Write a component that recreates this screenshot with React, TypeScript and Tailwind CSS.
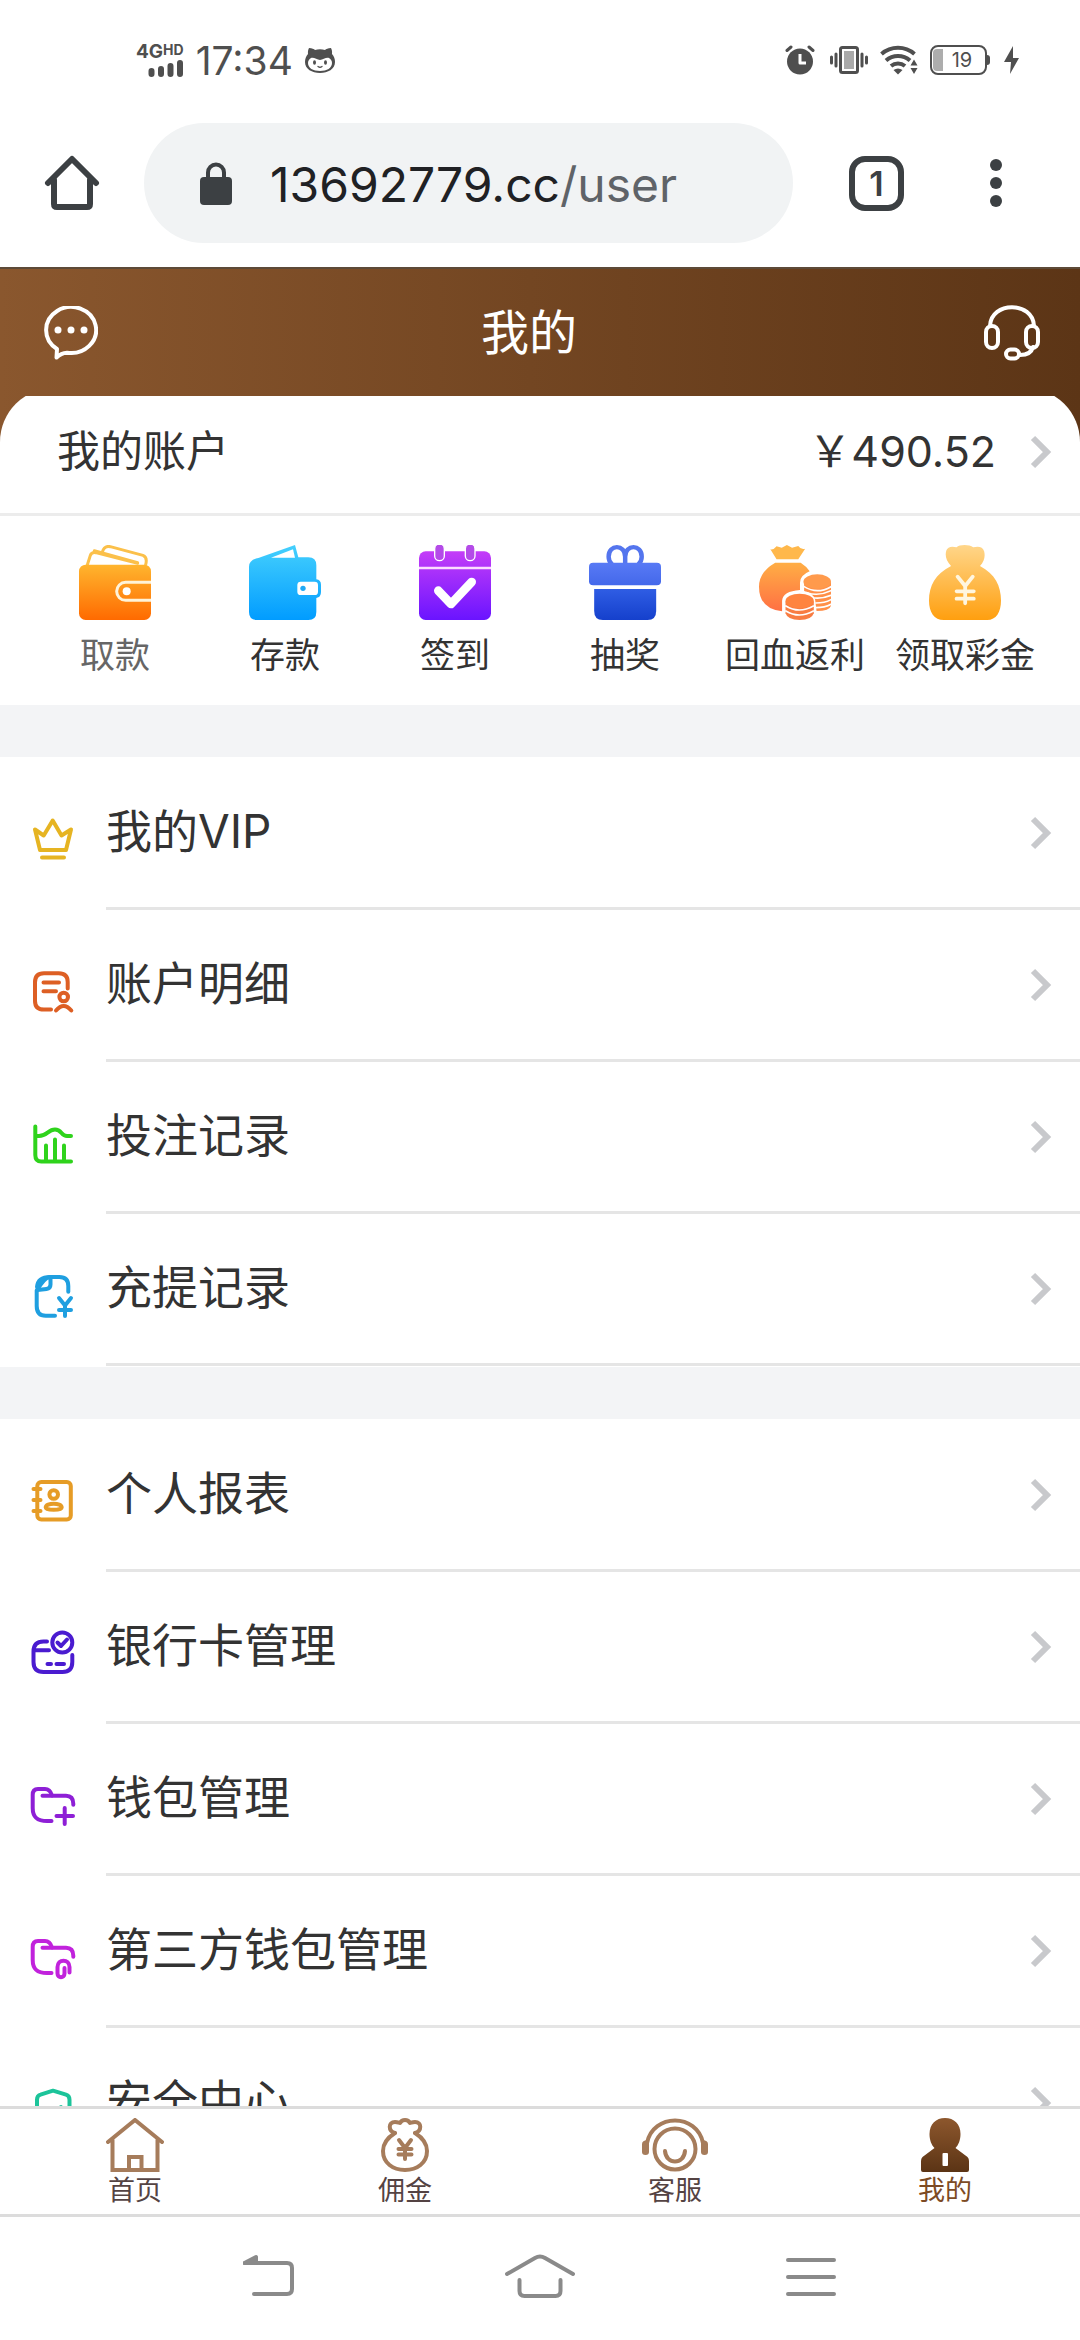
import type { ReactNode } from 'react';

interface IconProps {
  w: number;
  h: number;
  box?: string;
  stroke?: number;
  children: ReactNode;
}

function Icon({ w, h, box, stroke = 3, children }: IconProps) {
  return (
    <svg
      width={w}
      height={h}
      viewBox={box ?? `0 0 ${w} ${h}`}
      preserveAspectRatio="none"
      fill="none"
      stroke="currentColor"
      strokeWidth={stroke}
      strokeLinecap="round"
      strokeLinejoin="round"
      aria-hidden="true"
      className="shrink-0"
    >
      {children}
    </svg>
  );
}

function Gradient({ id, from, to }: { id: string; from: string; to: string }) {
  return (
    <defs>
      <linearGradient id={id} x1="0" y1="0" x2="0" y2="1">
        <stop offset="0" stopColor={from} />
        <stop offset="1" stopColor={to} />
      </linearGradient>
    </defs>
  );
}

function Chevron() {
  return (
    <svg width="22" height="34" viewBox="0 0 22 34" fill="none" className="shrink-0 text-[#c8c9cc]" aria-hidden="true">
      <path d="M3 3l14 14L3 31" stroke="currentColor" strokeWidth="6" />
    </svg>
  );
}

function StatusBar() {
  return (
    <div className="flex h-[100px] items-center justify-between pt-5 pr-[60px] pl-[136px] text-[#4f4f4f]">
      <div className="flex items-center">
        <div className="flex flex-col items-end">
          <span className="flex items-start font-bold">
            <span className="text-[19px] leading-4">4G</span>
            <span className="text-[14px] leading-3">HD</span>
          </span>
          <Icon w={36} h={17} stroke={6}>
            <path d="M3.500 11v3M13 9v5M22.500 6v8M32 3v11" />
          </Icon>
        </div>
        <span className="ml-3 text-[39px] leading-none">17:34</span>
        <span className="ml-3">
          <Icon w={30} h={25} stroke={0}>
            <path
              fill="currentColor"
              d="M4 0c3 0 5 1 6 2 3-1 7-1 10 0 1-1 3-2 6-2 1.500 3 1 5 1 6 2 2 3 5 3 8 0 7-7 11-15 11S0 21 0 14c0-3 1-6 3-8 0-1-.5-3 1-6z"
            />
            <path fill="#fff" d="M15 12c3 0 6-3 9-2 2 1 3 3 3 5 0 5-5 8-12 8S3 20 3 15c0-2 1-4 3-5 3-1 6 2 9 2z" />
            <ellipse cx="9.500" cy="14.500" rx="1.500" ry="2.300" fill="currentColor" />
            <ellipse cx="20.500" cy="14.500" rx="1.500" ry="2.300" fill="currentColor" />
            <path d="M13 18.500q2 1.500 4 0" stroke="currentColor" strokeWidth="1.300" />
          </Icon>
        </span>
      </div>
      <div className="flex items-center">
        <Icon w={30} h={30}>
          <circle cx="15" cy="16.500" r="13" fill="currentColor" stroke="none" />
          <path d="M2 5.500l4-3.500M28 5.500L24 2" />
          <path d="M15 9v9h6" stroke="#fff" strokeLinecap="butt" />
        </Icon>
        <span className="ml-[15px]">
          <Icon w={38} h={30}>
            <rect x="10.500" y="2.500" width="17" height="25" rx="2" />
            <rect x="14" y="6" width="10" height="18" fill="#aaa" stroke="none" />
            <path d="M6 9v12M1.500 12v6M32 9v12M36.500 12v6" />
          </Icon>
        </span>
        <span className="ml-3">
          <Icon w={38} h={30} stroke={4}>
            <g strokeLinecap="butt">
              <path d="M1.500 9a25 25 0 0 1 33 0M6 15.500a18 18 0 0 1 24 0M11 21a11 11 0 0 1 14 0" />
            </g>
            <path d="M13.500 25q4.500-3 9 0L18 29.500z" fill="currentColor" stroke="none" />
            <path d="M34 14.500l3.500 6h-7zM34 29l3.500-6h-7z" fill="currentColor" stroke="none" />
          </Icon>
        </span>
        <div className="ml-3 flex h-[30px] w-[57px] items-center rounded-lg border-2 border-current pl-px">
          <span className="h-[22px] w-[10px] rounded-l bg-[#adadad]" />
          <span className="flex-1 pr-1 text-center text-xl leading-none">19</span>
        </div>
        <span className="h-[10px] w-[3px] rounded-r bg-current" />
        <span className="ml-[14px]">
          <Icon w={16} h={28} stroke={0}>
            <path d="M9 0L0 16h7L6 28l9-16H9z" fill="currentColor" />
          </Icon>
        </span>
      </div>
    </div>
  );
}

function BrowserBar() {
  return (
    <div className="flex h-[167px] items-start pt-[23px] pr-[78px] pl-[44px] text-[#3c4043]">
      <button aria-label="主页" className="flex h-[120px] items-center">
        <Icon w={56} h={56} stroke={6}>
          <path d="M4 28L28 4l24 24" />
          <path d="M10 25v24q0 3 3 3h30q3 0 3-3V25" />
        </Icon>
      </button>
      <button className="ml-11 flex h-[120px] flex-1 items-center rounded-full bg-[#f1f3f4] pl-14 text-5xl">
        <Icon w={32} h={43} stroke={4}>
          <path d="M8 16v-5.500a8 8 0 0 1 16 0V16" strokeLinecap="butt" />
          <rect y="15" width="32" height="28" rx="4" fill="currentColor" stroke="none" />
        </Icon>
        <span className="pt-1 pl-[38px] text-[#202124]">
          13692779.cc<span className="text-[#5f6368]">/user</span>
        </span>
      </button>
      <button className="ml-14 flex h-[120px] items-center">
        <span className="flex h-[55px] w-[55px] items-center justify-center rounded-2xl border-6 border-current text-[34px] font-semibold">
          1
        </span>
      </button>
      <button aria-label="菜单" className="ml-[86px] flex h-[120px] items-center">
        <Icon w={12} h={50} stroke={0}>
          <circle cx="6" cy="7" r="6" fill="currentColor" />
          <circle cx="6" cy="25" r="6" fill="currentColor" />
          <circle cx="6" cy="43" r="6" fill="currentColor" />
        </Icon>
      </button>
    </div>
  );
}

const actions = [
  {
    label: '取款',
    color: 'text-[#666]',
    icon: (
      <Icon w={72} h={75} box="114 45 216 225" stroke={9}>
        <Gradient id="withdraw" from="#ffb52e" to="#ff6a00" />
        <g stroke="#fbc04a">
          <path d="M184 66q6-20 24-16l98 26q14 5 8 28" />
          <path d="M138 108l10-32q4-10 16-8l126 32" />
          <path d="M160 62l130 36" />
        </g>
        <rect x="114" y="104" width="216" height="166" rx="20" fill="url(#withdraw)" stroke="none" />
        <path d="M334 157h-80a27 27 0 0 0 0 54h80" stroke="#fff3d8" />
        <circle cx="257" cy="184" r="12" fill="#fff" stroke="none" />
      </Icon>
    ),
  },
  {
    label: '存款',
    color: 'text-[#333]',
    icon: (
      <Icon w={72} h={75} box="624 45 216 225" stroke={0}>
        <Gradient id="deposit" from="#45d0fd" to="#019cff" />
        <path
          d="M652 84L762 45l10 37h30q24 0 24 24v42q14 2 14 16v22q0 16-14 18v42q0 24-24 24H648q-24 0-24-24V110q0-20 28-26z"
          fill="url(#deposit)"
        />
        <path d="M690 83l66-25 6 25z" fill="#fff" />
        <rect x="769" y="155" width="62" height="40" rx="10" fill="#fff" />
        <circle cx="786" cy="175" r="8" fill="#1fa9f5" />
      </Icon>
    ),
  },
  {
    label: '签到',
    color: 'text-[#333]',
    icon: (
      <Icon w={72} h={75} box="1137 45 216 225" stroke={4}>
        <Gradient id="checkin" from="#c43df8" to="#6a14ff" />
        <rect x="1137" y="64" width="216" height="206" rx="20" fill="url(#checkin)" stroke="none" />
        <path d="M1137 114h216" stroke="#fbdcff" strokeWidth="8" />
        <rect x="1184" y="42" width="29" height="50" rx="14" fill="#b44be8" stroke="#fff" />
        <rect x="1276" y="42" width="29" height="50" rx="14" fill="#b44be8" stroke="#fff" />
        <path d="M1195 182l38 40 62-66" stroke="#fff" strokeWidth="26" />
      </Icon>
    ),
  },
  {
    label: '抽奖',
    color: 'text-[#333]',
    icon: (
      <Icon w={72} h={75} box="142 45 209 225" stroke={13}>
        <Gradient id="giftTop" from="#587af5" to="#4468ea" />
        <Gradient id="giftBox" from="#2f5de4" to="#1540cc" />
        <g stroke="#5475ee">
          <path d="M247 102V80c0-38-48-38-48 0 0 10 3 16 9 22M247 102V80c0-38 48-38 48 0 0 10-3 16-9 22" />
        </g>
        <rect x="142" y="98" width="209" height="68" rx="12" fill="url(#giftTop)" stroke="none" />
        <path d="M157 177h180v66q0 27-25 27H182q-25 0-25-27z" fill="url(#giftBox)" stroke="none" />
      </Icon>
    ),
  },
  {
    label: '回血返利',
    color: 'text-[#333]',
    icon: (
      <Icon w={72} h={75} box="639 45 209 225" stroke={0}>
        <Gradient id="rebate" from="#ffae45" to="#ff7043" />
        <path d="M690 88l-18-30q10 2 18-9l15 4 15-8 15 8 18-5q8 12 20 8l-20 32z" fill="#ffb84b" />
        <path
          d="M686 98h74q16 10 26 26-28 12-28 34v22q-50 4-52 32v32q-67-8-67-74 0-44 47-72z"
          fill="url(#rebate)"
        />
        <path d="M770 157h78v70q-4 16-42 16l-4-34q-6-20-32-26z" fill="#ff8f48" />
        <ellipse cx="808" cy="155" rx="40" ry="22" fill="#ff9a4c" />
        <g stroke="#fff" strokeWidth="5">
          <path d="M770 170q38 24 78 0M778 188q34 12 70-6M800 204q26 2 48-8M804 219q26 0 44-10M804 233q26 0 44-10" />
        </g>
        <path d="M716 214h82v36q-6 20-41 20t-41-20z" fill="#f87c42" />
        <ellipse cx="757" cy="213" rx="41" ry="22" fill="#ff843f" />
        <g stroke="#fff" strokeWidth="5">
          <path d="M717 228q38 24 80 0M717 243q38 24 80 0" />
        </g>
      </Icon>
    ),
  },
  {
    label: '领取彩金',
    color: 'text-[#333]',
    icon: (
      <Icon w={72} h={75} box="1132 45 209 225" stroke={11}>
        <Gradient id="bonus" from="#ffd68a" to="#ff9f0f" />
        <path
          d="M1196 108c-14-16-18-30-14-46 4-12 16-14 30-10 8-9 38-9 48 0 16-4 28-2 32 12 4 16 0 30-12 44 44 24 61 60 61 104 0 34-14 58-40 58h-126c-28 0-43-24-43-58 0-44 18-80 64-104z"
          fill="url(#bonus)"
          stroke="none"
        />
        <path d="M1215 140l22 28 22-28M1237 168v52M1212 184h50M1212 206h50" stroke="#fff6e0" />
      </Icon>
    ),
  },
];

const folder = (
  <>
    <path d="M21.500 39H17C8 39 2.700 36 2.700 26V13Q2.700 7 8 7h7q5 0 7 6.500" />
    <path d="M12.500 13.800H36q7.300 0 7.300 8v1" />
  </>
);

const recordItems = [
  {
    label: '我的VIP',
    color: 'text-[#e6b422]',
    icon: <path d="M5 13.500L10 34h26l5-20.500-9.500 6L22.700 4.500l-9 15zM12 41.500h22" />,
  },
  {
    label: '账户明细',
    color: 'text-[#dd5f24]',
    icon: (
      <>
        <path d="M37.700 20.500V14q0-8.700-9-8.700H14q-9 0-9 9V33q0 8.600 9 8.600h7M13.500 14.500H29M13.500 23.300H26" />
        <circle cx="33.700" cy="29" r="4.300" />
        <path d="M26 42.500q7.700-9 15.300 0" />
      </>
    ),
  },
  {
    label: '投注记录',
    color: 'text-[#2fd31c]',
    icon: (
      <>
        <path d="M5.300 6.500V35q0 6.600 6 6.600H41M5.300 16H9c8 0 9-6.500 16-6.500S31 16 37 16h4" />
        <path d="M16 25.500V41M25 19.500V41M34 25.500V41" />
      </>
    ),
  },
  {
    label: '充提记录',
    color: 'text-[#1f9fe0]',
    icon: (
      <>
        <path d="M38.300 19.700V14q0-9-9-9H20q-5 0-13.300 13.500V34q0 9.800 9 9.800H25" />
        <path d="M20.500 5.500v7q0 4-4 4.500l-9 1M7 15Q8 5 20 5" />
        <path d="M29 26l6 7.500 6-7.500M35 33.500V44M29 38h12" />
      </>
    ),
  },
];

const manageItems = [
  {
    label: '个人报表',
    color: 'text-[#e69c26]',
    icon: (
      <>
        <rect x="7.300" y="4" width="33.500" height="37.500" rx="4" />
        <path d="M3.500 11h7M3.500 22h7M3.500 33h7" />
        <circle cx="23.700" cy="16.500" r="4.300" />
        <path d="M15.700 29.500c0-5 16-5 16 0 0 3-16 3-16 0z" />
      </>
    ),
  },
  {
    label: '银行卡管理',
    color: 'text-[#4a1bd0]',
    icon: (
      <>
        <path d="M17 11.500h-3.500q-10 0-10 10V32q0 10 10 10h19q9.800 0 9.800-10v-7M3.500 20.200H19M17.500 34H21M26.500 34H34" />
        <circle cx="32.300" cy="12.500" r="10" />
        <path d="M27.500 12.500l3.500 3.500 6-6.500" />
      </>
    ),
  },
  {
    label: '钱包管理',
    color: 'text-[#8e1fd6]',
    icon: (
      <>
        {folder}
        <path d="M34.700 26v16M26.500 34H43" />
      </>
    ),
  },
  {
    label: '第三方钱包管理',
    color: 'text-[#c122dc]',
    icon: (
      <>
        {folder}
        <path d="M39.500 38.500V33c0-8.500-12-8.500-12 0v6.500c0 5 7 5 7 0V34" />
      </>
    ),
  },
  {
    label: '安全中心',
    color: 'text-[#1cc49a]',
    icon: <path d="M23 4.700l13 4q3.500 1 3.500 5V24q0 12-16.500 19Q7 36 7 24V13.700q0-4 3.500-5zM16 25l5 5 10-9" />,
  },
];

function MenuList({ items }: { items: typeof recordItems }) {
  return (
    <ul className="bg-white py-px">
      {items.map((item) => (
        <li key={item.label}>
          <a href="#" className="flex h-[152px]">
            <span className={`flex w-[106px] shrink-0 items-center pt-[10px] pl-[30px] ${item.color}`}>
              <Icon w={46} h={46} stroke={4}>
                {item.icon}
              </Icon>
            </span>
            <span className="flex flex-1 items-center justify-between border-b-3 border-[#e5e5e5] pr-7">
              <span className="pb-[2px] text-[46px] text-[#333]">{item.label}</span>
              <Chevron />
            </span>
          </a>
        </li>
      ))}
    </ul>
  );
}

const tabs = [
  {
    label: '首页',
    color: 'text-[#544343]',
    icon: (
      <Icon w={58} h={54} stroke={4}>
        <path d="M2 24L29 2l27 22M6.500 22v30h45V22M23 52V39h12.500v13" strokeLinejoin="miter" />
      </Icon>
    ),
  },
  {
    label: '佣金',
    color: 'text-[#544343]',
    icon: (
      <Icon w={48} h={54} stroke={4}>
        <path d="M14 15C6 20 2 27 2 33c0 12 10 19 22 19s22-7 22-19c0-6-4-13-12-18" />
        <path d="M14 15C7 13 7 4 14 4c3 0 4 1 5 1 2-4 8-4 10 0 1 0 2-1 5-1 7 0 7 9 0 11" />
        <path d="M18 22l6 8 6-8M24 30v11M17.500 31h13M17.500 36.500h13" />
      </Icon>
    ),
  },
  {
    label: '客服',
    color: 'text-[#544343]',
    icon: (
      <Icon w={66} h={54} stroke={4}>
        <circle cx="33" cy="31" r="20.500" />
        <path d="M23 33c1 14 19 14 20 0" />
        <path d="M5 25C11-5 55-5 61 25" />
        <path d="M7 22v12q0 3-3.500 3T0 34v-8q0-4 7-4zM59 22v12q0 3 3.500 3t3.500-3v-8q0-4-7-4z" fill="currentColor" stroke="none" />
      </Icon>
    ),
  },
  {
    label: '我的',
    color: 'text-[#7d4b24]',
    icon: (
      <Icon w={48} h={54} stroke={0}>
        <Gradient id="mine" from="#8d572d" to="#5b3415" />
        <path
          d="M24 0c9 0 15.500 6 15.500 16 0 6-2 11-5 14l12 9q1.500 1.500 1.500 4v9q0 2-2 2H2q-2 0-2-2v-9q0-2.500 1.500-4l12-9c-3-3-5-8-5-14C8.500 6 15 0 24 0z"
          fill="url(#mine)"
        />
        <rect x="21.500" y="35" width="5.500" height="13" rx="1" fill="#fff" />
      </Icon>
    ),
  },
];

export default function App() {
  return (
    <div className="flex h-screen flex-col overflow-hidden bg-white font-['Inter','Noto_Sans_CJK_SC',sans-serif]">
      <StatusBar />
      <BrowserBar />

      <main className="flex min-h-0 flex-1 flex-col overflow-hidden bg-[#f3f4f6]">
        <section className="shrink-0 bg-linear-to-r from-[#8a572e] to-[#5c3516]">
          <header className="flex h-[129px] items-center justify-between border-t-2 border-[#5d4a38] pr-10 pl-11 text-white">
            <button aria-label="消息">
              <Icon w={54} h={54} stroke={4}>
                <path d="M13 43A25 23 0 1 1 23 46.700Q17 47 12.500 51.500z" />
                <g fill="currentColor" stroke="none">
                  <circle cx="14" cy="24" r="3.500" />
                  <circle cx="27" cy="24" r="3.500" />
                  <circle cx="40" cy="24" r="3.500" />
                </g>
              </Icon>
            </button>
            <h1 className="text-5xl">我的</h1>
            <button aria-label="客服" className="pl-6">
              <Icon w={56} h={56} stroke={4}>
                <rect x="2" y="21" width="12" height="22" rx="6" />
                <rect x="42" y="21" width="12" height="22" rx="6" />
                <path d="M6 21C7-4 49-4 50 21M49 42q-2 8-13 8" />
                <rect x="22" y="44.500" width="13" height="9" rx="4.500" />
              </Icon>
            </button>
          </header>
          <div className="overflow-hidden">
            <a
              href="#"
              className="-mt-2 flex h-[128px] items-center rounded-t-[54px] border-b-3 border-[#ececec] bg-white pt-[2px] pr-7 pl-[57px] text-[43px] text-[#333]"
            >
              <span>我的账户</span>
              <span className="mr-[34px] ml-auto">￥490.52</span>
              <Chevron />
            </a>
          </div>
        </section>

        <nav className="flex h-[189px] shrink-0 bg-white px-[30px] pt-[29px]">
          {actions.map((action) => (
            <a key={action.label} href="#" className="flex flex-1 flex-col items-center gap-[13px]">
              {action.icon}
              <span className={`text-[35px] leading-[44px] whitespace-nowrap ${action.color}`}>{action.label}</span>
            </a>
          ))}
        </nav>

        <div className="mt-[52px] flex flex-col gap-[52px]">
          <MenuList items={recordItems} />
          <MenuList items={manageItems} />
        </div>
      </main>

      <nav className="flex h-[111px] shrink-0 border-y-3 border-[#dcdcdc] bg-white pt-[9px]">
        {tabs.map((tab) => (
          <a key={tab.label} href="#" className={`flex flex-1 flex-col items-center gap-[3px] ${tab.color}`}>
            <span className="text-[#a67c5b]">{tab.icon}</span>
            <span className="text-[27px] leading-8">{tab.label}</span>
          </a>
        ))}
      </nav>

      <div className="flex h-[123px] shrink-0 items-start justify-between px-[243px] pt-[37px] text-[#8a8a8a]">
        <button aria-label="返回">
          <Icon w={52} h={44} stroke={4}>
            <path d="M2 9h42q5 0 5 5v21q0 5-5 5H11" />
            <path d="M1.500 9L13 3v6z" fill="currentColor" />
          </Icon>
        </button>
        <button aria-label="主屏幕">
          <Icon w={72} h={46} stroke={4}>
            <path d="M3 20L31 4q5-3 10 0l28 16M15.500 26v11q0 5 5 5h31q5 0 5-5V26" />
          </Icon>
        </button>
        <button aria-label="最近任务">
          <Icon w={52} h={44} stroke={4}>
            <path d="M3 6h46M3 23h46M3 40h46" />
          </Icon>
        </button>
      </div>
    </div>
  );
}
